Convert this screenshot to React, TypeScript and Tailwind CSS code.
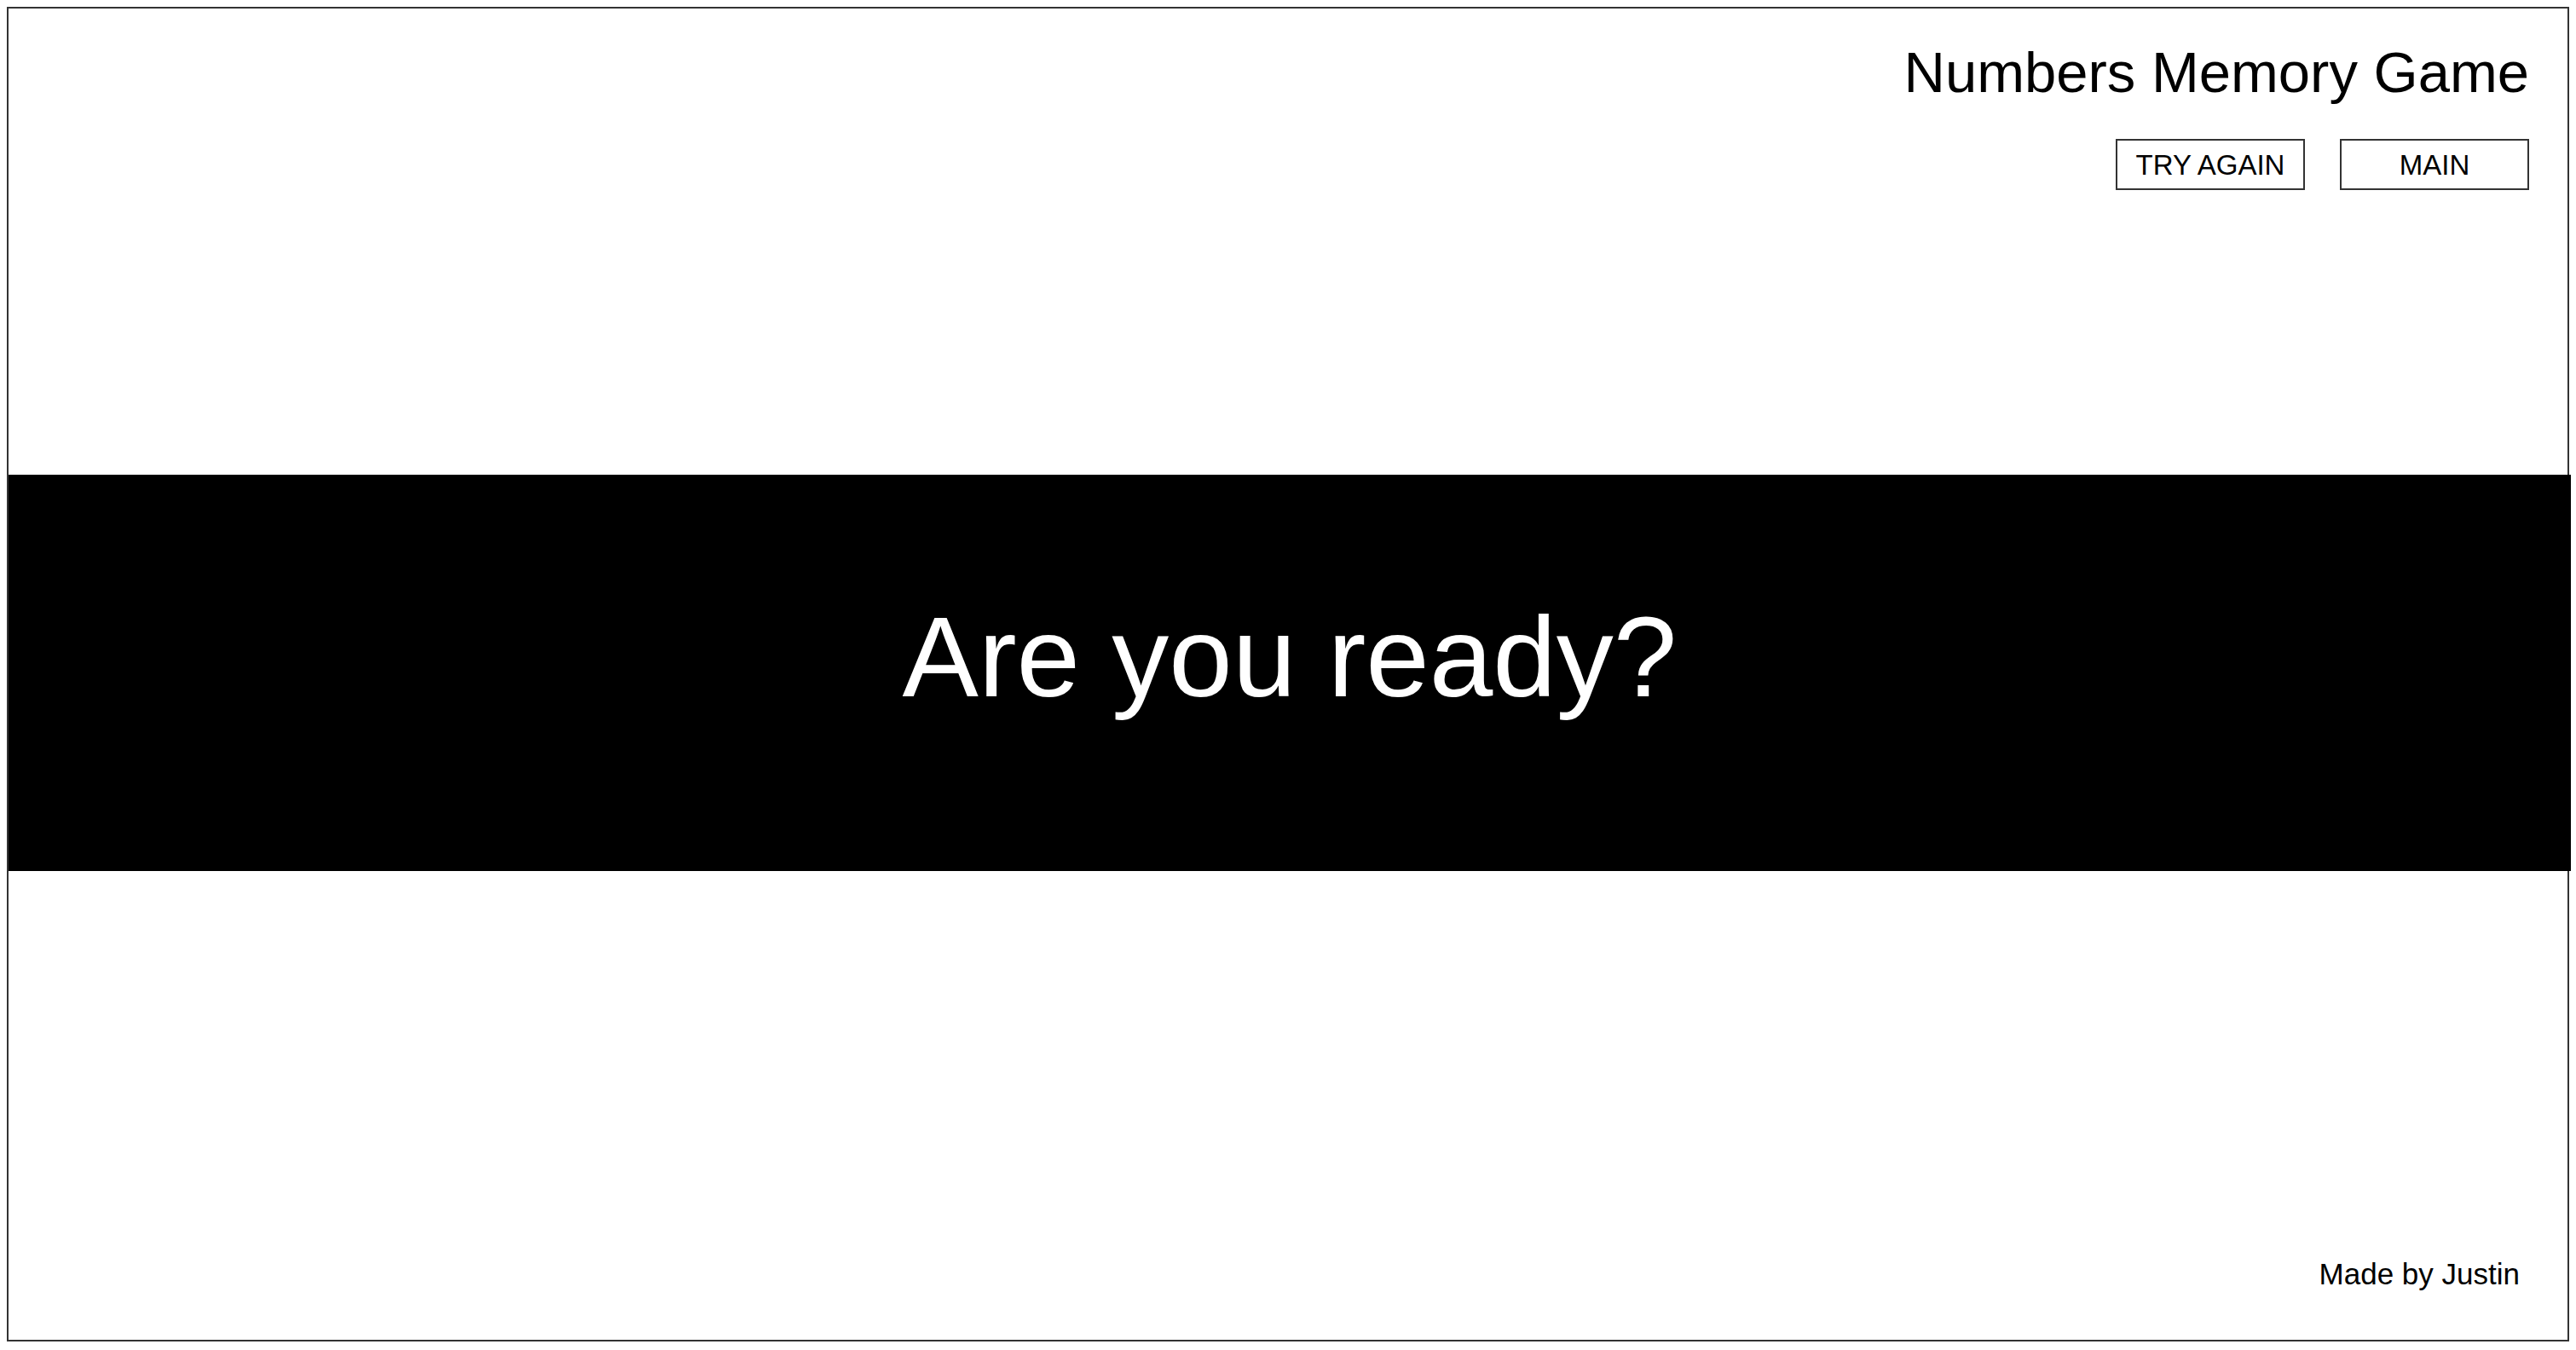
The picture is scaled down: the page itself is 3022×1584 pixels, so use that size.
export default function App() {
  return (
    <div className="p-2 bg-white font-['Liberation_Sans',Arial,Helvetica,sans-serif] text-black">
      <div className="h-[1566px] border-2 border-[#333] flex flex-col">
        <div className="flex flex-col items-end pt-[41px] pr-[45px]">
          <h1 className="text-[67px] leading-none font-normal">Numbers Memory Game</h1>
          <div className="flex gap-[41px] mt-[45px]">
            <button className="w-[222px] h-[60px] border-2 border-[#333] flex items-center justify-center text-[33px] leading-none">
              TRY AGAIN
            </button>
            <button className="w-[222px] h-[60px] border-2 border-[#333] flex items-center justify-center text-[33px] leading-none">
              MAIN
            </button>
          </div>
        </div>
        <div className="mt-[334px] mr-[-4px] h-[465px] bg-black flex items-center justify-center pb-[38px]">
          <p className="text-white text-[134px] leading-none">Are you ready?</p>
        </div>
        <div className="flex-1 flex items-end justify-end pr-[56px] pb-[60px]">
          <p className="text-[35px] leading-none">Made by Justin</p>
        </div>
      </div>
    </div>
  );
}
